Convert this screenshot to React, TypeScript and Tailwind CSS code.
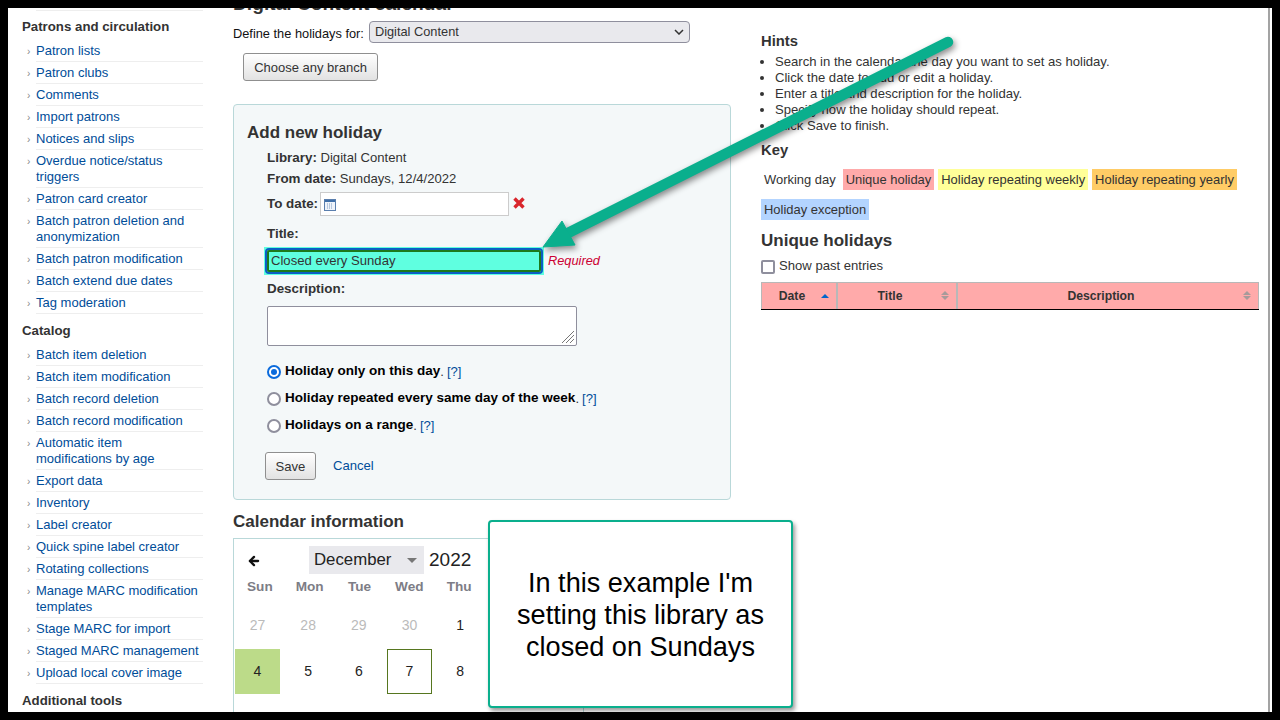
import { ArrowLeft } from 'lucide-react'

const font = "[font-family:'Liberation_Sans',Arial,sans-serif]"

const groups = [
  {
    title: 'Patrons and circulation',
    links: [
      'Patron lists',
      'Patron clubs',
      'Comments',
      'Import patrons',
      'Notices and slips',
      'Overdue notice/status triggers',
      'Patron card creator',
      'Batch patron deletion and anonymization',
      'Batch patron modification',
      'Batch extend due dates',
      'Tag moderation',
    ],
  },
  {
    title: 'Catalog',
    links: [
      'Batch item deletion',
      'Batch item modification',
      'Batch record deletion',
      'Batch record modification',
      'Automatic item modifications by age',
      'Export data',
      'Inventory',
      'Label creator',
      'Quick spine label creator',
      'Rotating collections',
      'Manage MARC modification templates',
      'Stage MARC for import',
      'Staged MARC management',
      'Upload local cover image',
    ],
  },
]

const hints = [
  'Search in the calendar the day you want to set as holiday.',
  'Click the date to add or edit a holiday.',
  'Enter a title and description for the holiday.',
  'Specify how the holiday should repeat.',
  'Click Save to finish.',
]

// Fri and Sat sit behind the callout
const weekdays = ['Sun', 'Mon', 'Tue', 'Wed', 'Thu']

function Sidebar() {
  return (
    <div className="w-[195px] shrink-0 pt-[2px] pl-[14px]">
      <div className="ml-[14px] border-t border-[#eeeeee]" />
      {groups.map((g) => (
        <div key={g.title}>
          <h5 className="mt-[7px] mb-[4px] text-[13.25px] leading-[18px] font-bold text-[#333333]">{g.title}</h5>
          <ul>
            {g.links.map((l) => (
              <li key={l} className="relative ml-[14px] border-b border-[#eeeeee] pt-[3px] pr-[3px] pb-[2px] text-[13px] leading-[16px] text-[#004d99]">
                <span className="absolute left-[-9px] top-[6px] text-[10px] leading-[12px] text-[#888888]">›</span>
                {l}
              </li>
            ))}
          </ul>
          <div className="h-[1px]" />
        </div>
      ))}
      <h5 className="mt-[7px] text-[13.25px] leading-[18px] font-bold text-[#333333]">Additional tools</h5>
    </div>
  )
}

function CalendarIcon() {
  return (
    <svg width="12" height="13" viewBox="0 0 12 13" className="ml-[3px]">
      <rect x="0.5" y="1.5" width="11" height="11" fill="#eef3fa" stroke="#5a7fae" />
      <rect x="1" y="2" width="10" height="2" fill="#3f6fa8" />
      <path d="M3 6h6M3 8h6M3 10h6" stroke="#7f9cc2" strokeDasharray="1 1" />
    </svg>
  )
}

function Radio({ checked, label }: { checked?: boolean; label: string }) {
  return (
    <div className="flex h-[27px] items-center text-[#000000]">
      <span className={`mr-[4px] flex h-[14px] w-[14px] items-center justify-center rounded-full border-2 bg-white ${checked ? 'border-[#0b6bdc]' : 'border-[#8f8f9d]'}`}>
        {checked && <span className="h-[6px] w-[6px] rounded-full bg-[#0b6bdc]" />}
      </span>
      <b className="text-[13.5px]">{label}</b>
      <span className="text-[#333333]">.</span>
      <span className="ml-[3px] text-[#004d99]">[?]</span>
    </div>
  )
}

function HolidayForm() {
  return (
    <div className="mt-[23px] h-[396px] w-[498px] rounded-[4px] border border-[#b9d8d9] bg-[#f4f8f9] pt-[18px] pl-[13px]">
      <h3 className="text-[17px] leading-[20px] font-bold text-[#333333]">Add new holiday</h3>
      <div className="pl-[20px] text-[13.1px] text-[#333333]">
        <div className="mt-[4px] leading-[21px]"><b className="text-[13.4px]">Library:</b> Digital Content</div>
        <div className="leading-[21px]"><b className="text-[13.4px]">From date:</b> Sundays, 12/4/2022</div>
        <div className="mt-[3px] flex h-[24px] items-center">
          <b className="mr-[2px] text-[13.4px]">To date:</b>
          <div className="flex h-[24px] w-[189px] items-center border border-[#cccccc] bg-white">
            <CalendarIcon />
          </div>
          <svg width="14" height="14" viewBox="0 0 14 14" className="ml-[3px] -mt-[2px]">
            <path d="M2.5 2.5l9 9M11.5 2.5l-9 9" stroke="#d9262c" strokeWidth="3.4" />
          </svg>
        </div>
        <div className="mt-[9px] leading-[18px]"><b className="text-[13.4px]">Title:</b></div>
        <div className="mt-[4px] -ml-[3px] flex items-center">
          <div className="h-[28px] w-[280px] bg-[#5fffe0] p-[1px]">
            <div className="h-full rounded-[4px] border-2 border-[#0b5fc4]">
              <div className="flex h-full items-center rounded-[2px] border-2 border-[#1c7a1c] pl-[2px] text-[#333333]">Closed every Sunday</div>
            </div>
          </div>
          <i className="ml-[4px] text-[12.8px] text-[#cc0033]">Required</i>
        </div>
        <div className="mt-[5px] leading-[18px]"><b className="text-[13.4px]">Description:</b></div>
        <div className="relative mt-[8px] h-[40px] w-[310px] rounded-[2px] border border-[#8f8f9d] bg-white">
          <svg width="14" height="14" viewBox="0 0 14 14" className="absolute right-[1px] bottom-[1px]">
            <path d="M1 13L13 1M5 13l8-8M9 13l4-4" stroke="#777777" />
          </svg>
        </div>
        <div className="mt-[12px]">
          <Radio checked label="Holiday only on this day" />
          <Radio label="Holiday repeated every same day of the week" />
          <Radio label="Holidays on a range" />
        </div>
        <div className="mt-[13px] -ml-[2px] flex items-center">
          <div className="flex h-[28px] w-[51px] items-center justify-center rounded-[3px] border border-[#8f8f8f] bg-gradient-to-b from-white to-[#e2e2e2] pt-[1px] text-[#333333]">Save</div>
          <span className="ml-[17px] -mt-[1px] text-[#004d99]">Cancel</span>
        </div>
      </div>
    </div>
  )
}

function Calendar() {
  const first = [27, 28, 29, 30, 1]
  const second = [4, 5, 6, 7, 8]
  return (
    <div className="mt-[6px] h-[190px] w-[351px] border border-[#b9d8d9] bg-white text-[#222222]">
      <div className="relative flex h-[35px] items-center pt-[7px]">
        <ArrowLeft size={14} strokeWidth={4} className="absolute left-[13px] top-[15px] text-[#111111]" />
        <div className="ml-[75px] flex h-[28px] w-[115px] items-center justify-between bg-[#e9e9ed] pr-[7px] pl-[5px] text-[16.8px]">
          December
          <span className="h-0 w-0 border-x-[5px] border-t-[5px] border-x-transparent border-t-[#777777]" />
        </div>
        <span className="ml-[5px] text-[19px]">2022</span>
      </div>
      <div className="mt-[5px] grid grid-cols-[repeat(7,49.8px)] pl-[1px] text-center text-[13.6px] leading-[16px] font-bold text-[#7d7d86]">
        {weekdays.map((d) => <div key={d}>{d}</div>)}
      </div>
      <div className="mt-[7px] grid grid-cols-[repeat(7,50.67px)] pl-[1px] text-center text-[14px]">
        {first.map((d, i) => (
          <div key={d} className={`flex h-[47px] w-[45px] items-center justify-center ${d > 3 ? 'text-[#bbbbbb]' : 'text-[#222222]'} ${i === 0 ? 'col-start-1' : ''}`}>{d}</div>
        ))}
        {second.map((d, i) => (
          <div key={d} className={`flex h-[45px] w-[45px] items-center justify-center ${d === 4 ? 'bg-[#bcdb89]' : ''} ${d === 7 ? 'border border-[#56761f]' : ''} ${i === 0 ? 'col-start-1' : ''}`}>{d}</div>
        ))}
      </div>
    </div>
  )
}

function RightColumn() {
  const keyItem = 'mr-[4px] mb-[9px] inline-block h-[21px] px-[3px] leading-[21px]'
  return (
    <div className="ml-[30px] w-[498px] pt-[24px] text-[13.1px] text-[#333333]">
      <h4 className="text-[14.8px] leading-[18px] font-bold">Hints</h4>
      <ul className="mt-[4px] ml-[14px] list-disc leading-[16px]">
        {hints.map((h) => <li key={h}>{h}</li>)}
      </ul>
      <h4 className="mt-[7px] text-[14.8px] leading-[18px] font-bold">Key</h4>
      <div className="mt-[10px] flex flex-wrap text-[12.95px]">
        <span className={keyItem}>Working day</span>
        <span className={`${keyItem} bg-[#ffaaaa]`}>Unique holiday</span>
        <span className={`${keyItem} bg-[#ffff99]`}>Holiday repeating weekly</span>
        <span className={`${keyItem} bg-[#ffcc66]`}>Holiday repeating yearly</span>
        <span className={`${keyItem} bg-[#b3d4ff]`}>Holiday exception</span>
      </div>
      <h3 className="mt-[2px] text-[17px] leading-[20px] font-bold">Unique holidays</h3>
      <div className="mt-[6px] flex h-[18px] items-center">
        <span className="mr-[4px] h-[14px] w-[14px] translate-y-[1px] rounded-[2px] border-2 border-[#8f8f9d] bg-white" />
        Show past entries
      </div>
      <div className="mt-[7px] flex h-[28px] border-b border-b-[#000000] bg-[#ffaaaa] text-[12.2px] font-bold">
        <HeaderCell width="w-[76px]" label="Date" active />
        <HeaderCell width="w-[120px]" label="Title" />
        <HeaderCell width="w-[302px]" label="Description" />
      </div>
    </div>
  )
}

function HeaderCell({ width, label, active }: { width: string; label: string; active?: boolean }) {
  return (
    <div className={`relative flex items-center justify-center border-t border-r border-l border-[#b8b8b8] pr-[14px] ${width}`}>
      {label}
      {active ? (
        <span className="absolute top-[11px] right-[7px] h-0 w-0 border-x-[4px] border-b-[4px] border-x-transparent border-b-[#0066cc]" />
      ) : (
        <span className="absolute top-[8px] right-[7px] flex flex-col gap-[1px]">
          <span className="h-0 w-0 border-x-[4px] border-b-[4px] border-x-transparent border-b-[#a79a9a]" />
          <span className="h-0 w-0 border-x-[4px] border-t-[4px] border-x-transparent border-t-[#a79a9a]" />
        </span>
      )}
    </div>
  )
}

function Arrow() {
  return (
    <svg width="440" height="240" viewBox="0 0 440 240" className="absolute top-[14px] left-[522px] [filter:drop-shadow(2px_3px_3px_rgba(0,0,0,0.45))]">
      <path d="M418 20L38 211" stroke="#0aaf8d" strokeWidth="10.5" strokeLinecap="round" fill="none" />
      <path d="M13 225L32 199L45 223Z" fill="#0aaf8d" stroke="#0aaf8d" strokeWidth="1" />
    </svg>
  )
}

export default function App() {
  return (
    <div className={`h-[720px] w-[1280px] bg-black p-[8px] ${font}`}>
      <div className="relative h-[704px] w-[1264px] overflow-hidden bg-white">
        <div className="flex">
          <Sidebar />
          <div className="ml-[30px] w-[498px] shrink-0 text-[12.8px] text-[#333333]">
            <h1 className="-mt-[15px] text-[19.2px] leading-[22px] font-bold text-[#333333]">Digital Content calendar</h1>
            <div className="mt-[6px] flex h-[22px] items-center text-[#111111]">
              <span className="mt-[3px]">Define the holidays for:</span>
              <div className="ml-[5px] flex h-[22px] w-[321px] items-center justify-between rounded-[4px] border border-[#8f8f9d] bg-[#e9e9ed] pr-[5px] pl-[5px] text-[#333333]">
                Digital Content
                <svg width="10" height="6" viewBox="0 0 10 6"><path d="M1 1l4 4 4-4" stroke="#333333" strokeWidth="1.5" fill="none" /></svg>
              </div>
            </div>
            <div className="mt-[10px] ml-[10px] flex h-[28px] w-[135px] items-center justify-center rounded-[3px] border border-[#8f8f8f] bg-gradient-to-b from-white to-[#e2e2e2] pt-[1px] text-[13px] text-[#333333]">Choose any branch</div>
            <HolidayForm />
            <h3 className="mt-[12px] text-[17px] leading-[20px] font-bold text-[#333333]">Calendar information</h3>
            <Calendar />
          </div>
          <RightColumn />
        </div>
        <div className="absolute top-0 left-[1260px] h-full w-[2px] bg-[#a3a3a3]" />
        <Arrow />
        <div className="absolute top-[512px] left-[480px] flex h-[188px] w-[305px] items-center justify-center rounded-[4px] border-2 border-[#0aaf8d] bg-white pt-[2px] text-center text-[27.1px] leading-[32px] text-[#000000] shadow-[2px_3px_4px_rgba(0,0,0,0.4)]">
          <p className="w-[290px]">In this example I'm setting this library as closed on Sundays</p>
        </div>
      </div>
    </div>
  )
}
